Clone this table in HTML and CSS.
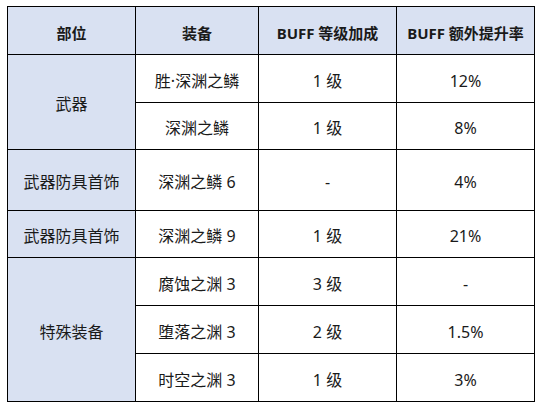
FILE: index.html
```html
<!DOCTYPE html>
<html lang="zh-CN">
<head>
<meta charset="utf-8">
<title>BUFF 表</title>
<link rel="stylesheet" href="styles.css">
</head>
<body>
<table class="buff-table">
  <colgroup>
    <col class="c1"><col class="c2"><col class="c3"><col class="c4">
  </colgroup>
  <thead>
    <tr class="r-head">
      <th class="shade">部位</th>
      <th class="shade">装备</th>
      <th class="shade">BUFF 等级加成</th>
      <th class="shade">BUFF 额外提升率</th>
    </tr>
  </thead>
  <tbody>
    <tr class="r48">
      <td class="shade" rowspan="2">武器</td>
      <td>胜·深渊之鳞</td>
      <td>1 级</td>
      <td>12%</td>
    </tr>
    <tr class="r47">
      <td>深渊之鳞</td>
      <td>1 级</td>
      <td>8%</td>
    </tr>
    <tr class="r61">
      <td class="shade">武器防具首饰</td>
      <td>深渊之鳞 6</td>
      <td>-</td>
      <td>4%</td>
    </tr>
    <tr class="r47b">
      <td class="shade">武器防具首饰</td>
      <td>深渊之鳞 9</td>
      <td>1 级</td>
      <td>21%</td>
    </tr>
    <tr class="r48">
      <td class="shade" rowspan="3">特殊装备</td>
      <td>腐蚀之渊 3</td>
      <td>3 级</td>
      <td>-</td>
    </tr>
    <tr class="r48">
      <td>堕落之渊 3</td>
      <td>2 级</td>
      <td>1.5%</td>
    </tr>
    <tr class="r48">
      <td>时空之渊 3</td>
      <td>1 级</td>
      <td>3%</td>
    </tr>
  </tbody>
</table>
</body>
</html>
```
FILE: styles.css
```css
html, body {
  margin: 0;
  padding: 0;
  background: #ffffff;
}

body {
  font-family: "Noto Sans", "Noto Sans CJK SC", sans-serif;
  font-size: 16px;
  color: #1a1a1a;
}

.buff-table {
  border-collapse: collapse;
  table-layout: fixed;
  margin: 6px 0 0 7px;
}

.c1 { width: 128px; }
.c2 { width: 123px; }
.c3 { width: 138px; }
.c4 { width: 138px; }

.buff-table th,
.buff-table td {
  border: 1px solid #000;
  text-align: center;
  vertical-align: middle;
  padding: 4px 0 0 0;
  line-height: 20px;
  white-space: nowrap;
}

.buff-table th {
  font-size: 15px;
  font-weight: 700;
}

.shade {
  background: #d9e1f2;
}

.r-head { height: 48px; }
.r48 { height: 48px; }
.r47 { height: 47px; }
.r47b { height: 47px; }
.r61 { height: 61px; }
```
